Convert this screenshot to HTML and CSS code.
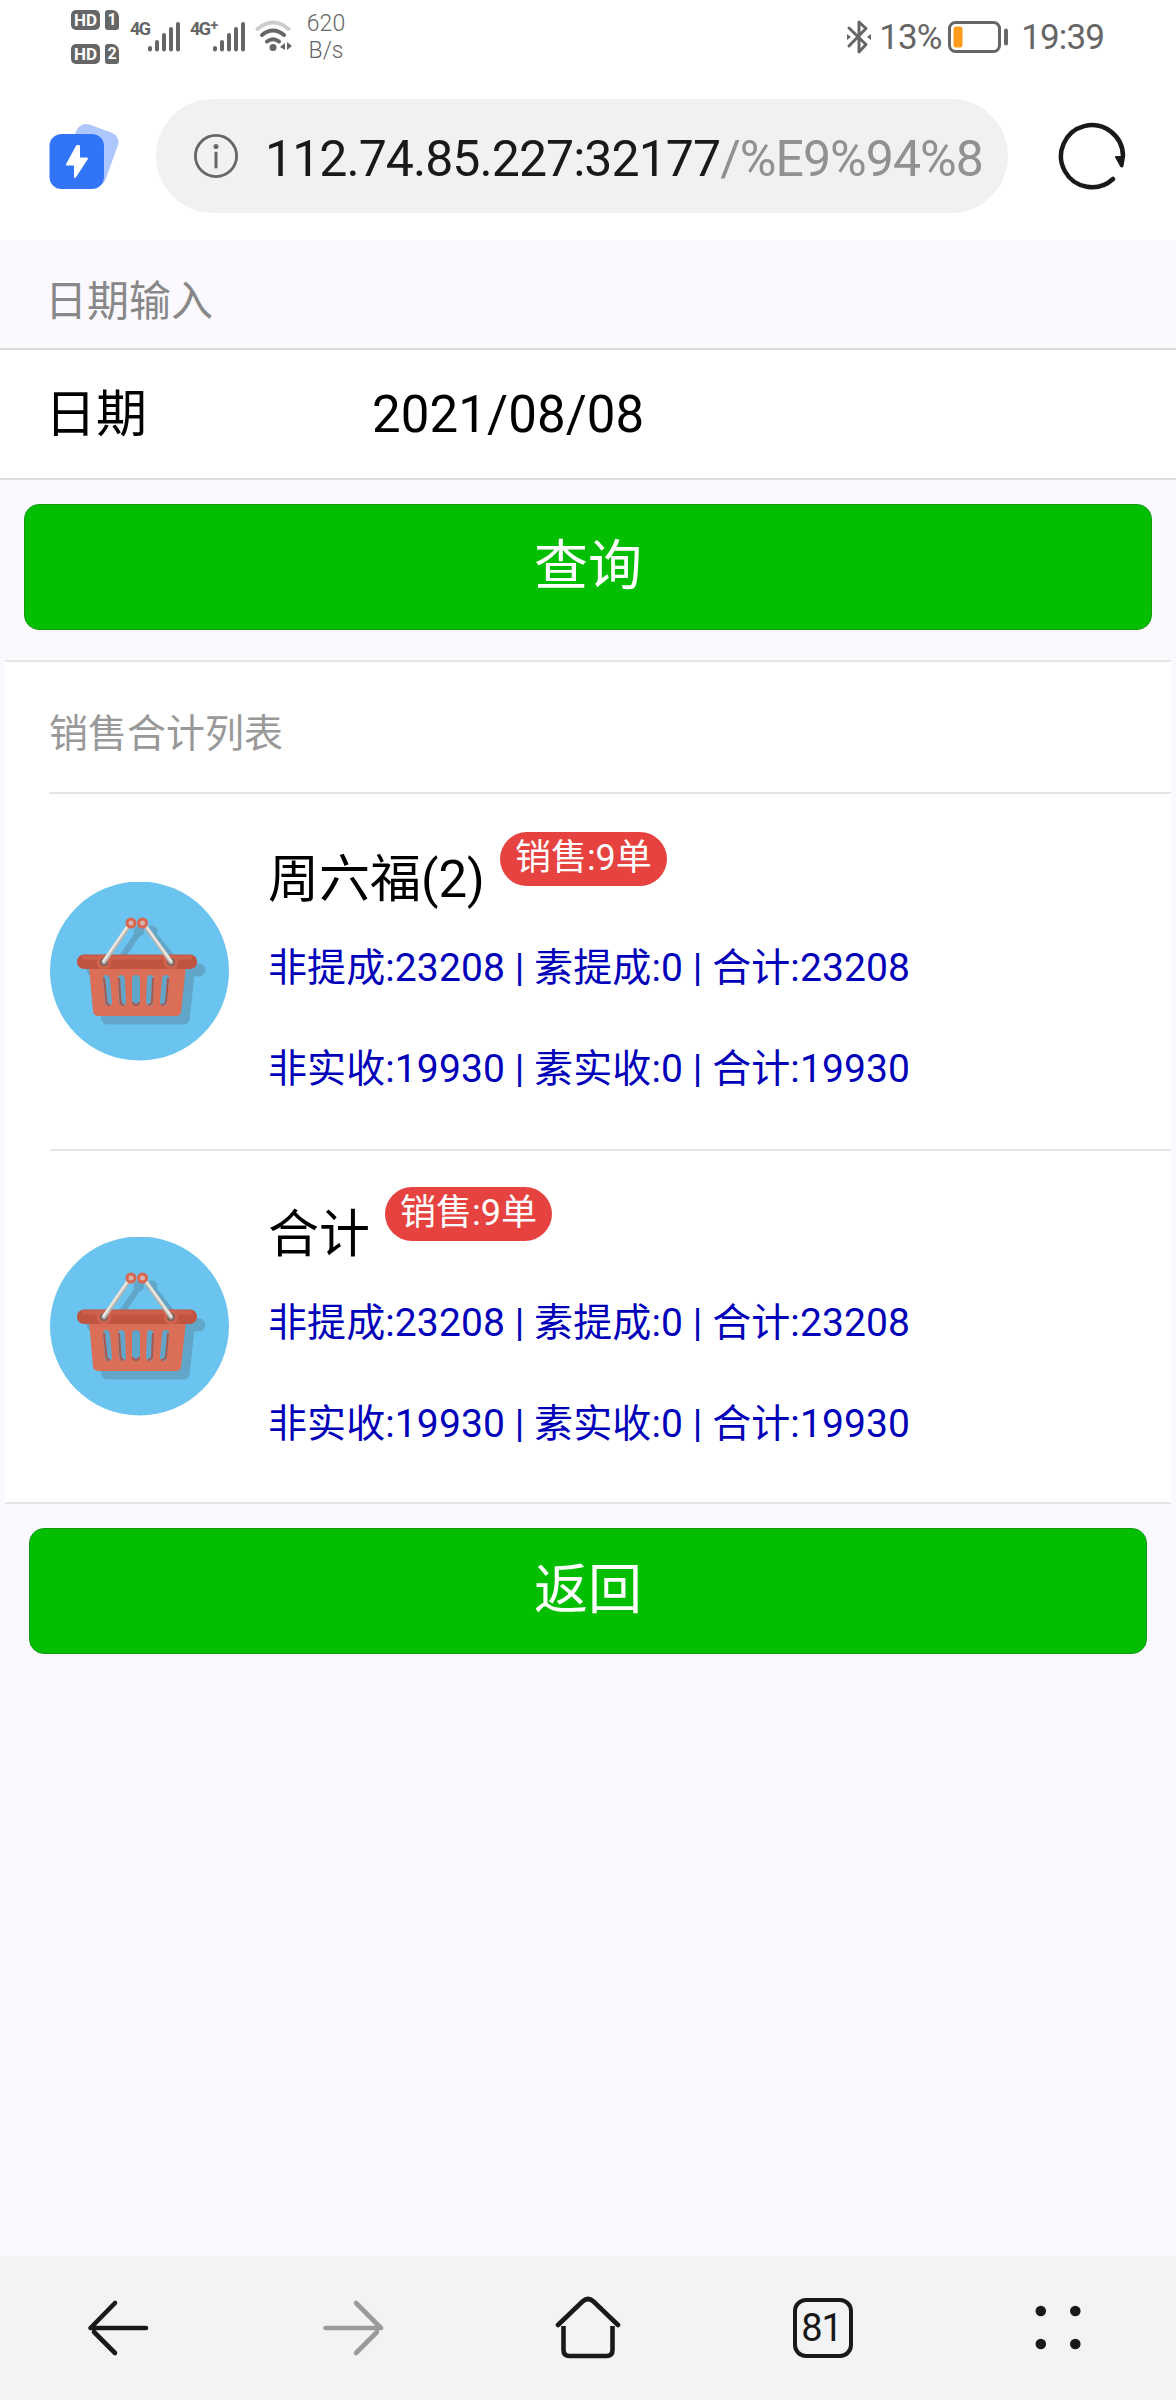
FILE: index.html
```html
<!DOCTYPE html>
<html lang="zh-CN">
<head>
<meta charset="utf-8">
<title>销售合计</title>
<link rel="stylesheet" href="styles.css">
</head>
<body>
<svg class="defs" width="0" height="0" aria-hidden="true">
  <defs>
    <g id="bars" fill="none" stroke="#666" stroke-width="4" stroke-linecap="round">
      <path d="M2 28v1.500M9 22v7.500M16 15v14.500M23 9v20.500M30 4v25.500"/>
    </g>
    <g id="basket">
      <circle cx="89.500" cy="89" r="89.500" fill="#6bc4f0"/>
      <g fill="#61a6c9" stroke="#61a6c9">
        <path d="M89 50L63 88M102 50L132 88" stroke-width="6" fill="none"/>
        <circle cx="89" cy="49" r="5"/><circle cx="102" cy="49" r="5"/>
        <rect x="37" y="82" width="118" height="12" rx="6"/>
        <path d="M48 92H144L139 138Q138 142 134 142H57Q53 142 52 138Z"/>
      </g>
      <path fill="#da6e57" fill-rule="evenodd" d="M39 84H136L131 130Q130 134 126 134H49Q44 134 43 130ZM53 97Q53 93 56 93T60 97L62 120Q62 124 58.500 124T55 120ZM68 97Q68 93 71 93T75 97L76 120Q76 124 73 124T69 120ZM82 97Q82 93 86 93T90 97V120Q90 124 86 124T82 120ZM97 97Q97 93 100 93T104 97L103 120Q103 124 100 124T96 120ZM112 97Q112 93 116 93T119 97L117 120Q117 124 113.500 124T110 120Z"/>
      <path fill="none" stroke="#a95850" stroke-width="2" d="M54 96L56.500 120Q57 123 60 123M69 96L70.500 120Q71 123 74 123M83 120Q83 123 86 123T89 120M103 96L102 120Q101 123 98 123M118 96L116 120Q115 123 111 123"/>
      <rect x="27" y="72.500" width="120" height="14.500" rx="7" fill="#c05440"/>
      <path d="M34 75.500H140" stroke="#cf604b" stroke-width="4" stroke-linecap="round"/>
      <circle cx="54" cy="80" r="7.500" fill="#d0614d"/><circle cx="121" cy="80" r="7.500" fill="#d0614d"/>
      <circle cx="54" cy="80" r="4" fill="#7b6261"/><circle cx="121" cy="80" r="4" fill="#7b6261"/>
      <path d="M78 45L54 80M96 45L121 80" stroke="#b9b4ae" stroke-width="4.500" stroke-linecap="round"/>
      <path d="M77 45L53.500 79M96.500 45L121 79" stroke="#e9e6e1" stroke-width="2.500" stroke-linecap="round"/>
      <circle cx="81" cy="41" r="4" fill="#d9b5ae" stroke="#d9664f" stroke-width="3"/>
      <circle cx="92.500" cy="41" r="4" fill="#d9b5ae" stroke="#d9664f" stroke-width="3"/>
    </g>
  </defs>
</svg>

<header class="status">
  <div class="sims">
    <div class="sim"><span class="hd">HD</span><span class="slot">1</span></div>
    <div class="sim"><span class="hd">HD</span><span class="slot">2</span></div>
  </div>
  <div class="signal"><span class="net">4G</span><svg width="34" height="34"><use href="#bars"/></svg></div>
  <div class="signal signal-plus"><span class="net">4G<span class="plus">+</span></span><svg width="34" height="34"><use href="#bars"/></svg></div>
  <svg class="wifi" width="38" height="34" viewBox="0 0 38 34" fill="none" stroke-width="4" stroke-linecap="round">
    <path d="M2.500 10Q18 -3 33.500 10" stroke="#ccc"/>
    <path d="M7 16Q18 7 29 16M12 22.500Q18 18 24 22.500" stroke="#666"/>
    <circle cx="18" cy="28.500" r="3.500" fill="#666"/>
    <path d="M30 24V31L25 28ZM32 23V31L37 27Z" fill="#666"/>
  </svg>
  <div class="speed"><span>620</span><span>B/s</span></div>
  <div class="status-right">
    <svg width="26" height="36" viewBox="0 0 26 36" fill="none" stroke="#666" stroke-width="3" stroke-linejoin="round" stroke-linecap="round">
      <path d="M3 9L20 25.500L13 33V3L20 9.500L3 27"/>
      <path d="M1 15V21L5 18ZM25 15V21L21 18Z" fill="#666" stroke="none"/>
    </svg>
    <span class="pct">13%</span>
    <svg width="60" height="32" viewBox="0 0 60 32">
      <rect x="1.500" y="1.500" width="50" height="29" rx="6" fill="none" stroke="#666" stroke-width="3"/>
      <rect x="5.500" y="5.500" width="9" height="21" rx="2.500" fill="#ff9b1a"/>
      <rect x="56" y="7.500" width="4" height="17" rx="2" fill="#666"/>
    </svg>
    <span class="clock">19:39</span>
  </div>
</header>

<div class="toolbar">
  <svg class="app" width="72" height="76" viewBox="0 0 72 76">
    <rect x="21" y="7" width="44" height="56" rx="10" transform="rotate(20 43 35)" fill="#adc6fc"/>
    <rect x="1.500" y="14" width="54.500" height="55" rx="12" fill="#3174f7"/>
    <path d="M29 26L19 44.500H27V57L39 38.500H31V26Z" fill="#fff" stroke="#fff" stroke-width="2" stroke-linejoin="round"/>
  </svg>
  <div class="address">
    <svg width="44" height="44" viewBox="0 0 44 44"><circle cx="22" cy="22" r="20.600" fill="none" stroke="#666" stroke-width="2.800"/><circle cx="22" cy="12.500" r="2.500" fill="#666"/><path d="M22 19V33" stroke="#666" stroke-width="3" stroke-linecap="round"/></svg>
    <div class="url">112.74.85.227:32177<span class="path">/%E9%94%8</span></div>
  </div>
  <svg class="reload" width="70" height="70" viewBox="0 0 70 70"><path d="M66 35A31 31 0 1 0 56 58" fill="none" stroke="#191919" stroke-width="4.500" stroke-linecap="round"/><path d="M59 36H67L65.500 45Q65 46 64 45Z" fill="#191919" stroke="#191919" stroke-width="2" stroke-linejoin="round"/></svg>
</div>

<main class="page">
  <h2 class="cells-title">日期输入</h2>
  <div class="cell"><label class="label">日期</label><span class="date">2021/08/08</span></div>
  <button class="btn">查询</button>

  <section class="panel">
    <div class="panel-head">销售合计列表</div>
    <article class="item">
      <svg width="180" height="179"><use href="#basket"/></svg>
      <div class="body">
        <h4 class="title">周六福(2)<span class="badge">销售:9单</span></h4>
        <p class="desc">非提成:23208 | 素提成:0 | 合计:23208</p>
        <p class="desc">非实收:19930 | 素实收:0 | 合计:19930</p>
      </div>
    </article>
    <article class="item">
      <svg width="180" height="179"><use href="#basket"/></svg>
      <div class="body">
        <h4 class="title">合计<span class="badge">销售:9单</span></h4>
        <p class="desc">非提成:23208 | 素提成:0 | 合计:23208</p>
        <p class="desc">非实收:19930 | 素实收:0 | 合计:19930</p>
      </div>
    </article>
  </section>
  <button class="btn btn-back">返回</button>
</main>

<nav class="nav">
  <svg width="64" height="64" viewBox="0 0 64 64" fill="none" stroke="#191919" stroke-width="4.600" stroke-linecap="round" stroke-linejoin="round"><path d="M60 32H4.500L29 7M29 57L8 36"/></svg>
  <svg width="64" height="64" viewBox="0 0 64 64" fill="none" stroke="#9b9b9d" stroke-width="4.600" stroke-linecap="round" stroke-linejoin="round"><path d="M4.500 32H60L35 7M35 57L56 36"/></svg>
  <svg width="68" height="64" viewBox="0 0 68 64" fill="none" stroke="#191919" stroke-width="4.600"><path d="M4 29L28.500 5.500Q34 .500 39.500 5.500L64 29" stroke-linecap="round"/><path d="M9.500 30V54Q9.500 60 15.500 60H52.500Q58.500 60 58.500 54V30"/></svg>
  <span class="tabs">81</span>
  <svg width="64" height="64" viewBox="0 0 64 64" fill="#191919"><circle cx="14.800" cy="15" r="5.300"/><circle cx="49.300" cy="15" r="5.300"/><circle cx="14.800" cy="48" r="5.300"/><circle cx="49.300" cy="48" r="5.300"/></svg>
</nav>
</body>
</html>
```
FILE: styles.css
```css
* { box-sizing: border-box; margin: 0; padding: 0; }

body {
  width: 1176px;
  height: 2400px;
  display: flex;
  flex-direction: column;
  background: #fff;
  font-family: Roboto, "Noto Sans CJK SC", sans-serif;
  color: #000;
  overflow: hidden;
}

svg { display: block; flex: none; }
.defs { position: absolute; }

/* Status bar */
.status {
  height: 80px;
  flex: none;
  display: flex;
  align-items: flex-start;
  padding: 10px 72px 0 71px;
  color: #666;
}
.sims { display: flex; flex-direction: column; gap: 14px; width: 59px; }
.sim { display: flex; gap: 5px; }
.hd, .slot {
  height: 20px;
  border-radius: 5px;
  background: #666;
  color: #fff;
  font-weight: 700;
  font-size: 17px;
  line-height: 20px;
  text-align: center;
}
.hd { width: 29px; }
.slot { width: 14px; border-radius: 3px 7px 3px 3px; font-size: 16px; }
.signal { display: flex; align-items: flex-start; padding-top: 10px; width: 60px; }
.net { width: 18px; font: 700 18px/18px "Liberation Sans Narrow", Roboto, sans-serif; letter-spacing: -1.5px; white-space: nowrap; }
.signal-plus { width: 65px; }
.signal-plus .net { display: flex; width: 23px; }
.plus { margin: -4px 0 0 1px; font-size: 14px; }
.wifi { margin-top: 9px; }
.speed {
  width: 56px;
  margin-left: 5px;
  display: flex;
  flex-direction: column;
  align-items: center;
  font-size: 23px;
  line-height: 27px;
  font-weight: 300;
}
.status-right { margin-left: auto; display: flex; align-items: center; padding-top: 10px; }
.status-right svg { margin-top: -3px; }
.pct, .clock { font-size: 35px; line-height: 36px; }
.pct { margin: 0 7px 0 7px; letter-spacing: -1px; }
.clock { margin-left: 13px; letter-spacing: -.9px; }

/* Browser toolbar */
.toolbar {
  height: 160px;
  flex: none;
  display: flex;
  align-items: flex-start;
  padding: 19px 0 0 48px;
}
.app { margin-top: 21px; }
.address {
  width: 852px;
  height: 114px;
  margin-left: 36px;
  padding-left: 38px;
  display: flex;
  align-items: center;
  gap: 27px;
  background: #f1f1f1;
  border-radius: 57px;
}
.url { padding-top: 6px; font-size: 50px; line-height: 60px; letter-spacing: -.95px; color: #191919; white-space: nowrap; }
.path { color: #919191; }
.reload { margin: 22px 0 0 49px; }

/* Page */
.page { flex: 1; background: #fbf9fe; }
.cells-title {
  height: 108px;
  padding: 30px 45px 0;
  font-size: 42px;
  line-height: 63px;
  font-weight: 400;
  color: #888;
}
.cell {
  height: 132px;
  display: flex;
  align-items: center;
  padding: 1px 45px 0;
  background: #fff;
  border: solid #dcdcdc;
  border-width: 2px 0;
  font-size: 51px;
  line-height: 72px;
}
.label { width: 327px; }
.date { letter-spacing: .1px; }
.btn {
  display: block;
  width: 1128px;
  height: 126px;
  margin: 24px auto 0;
  border: 1px solid #129912;
  border-radius: 15px;
  background: #04be02;
  color: #fff;
  font: 54px/122px Roboto, "Noto Sans CJK SC", sans-serif;
}
.panel {
  margin: 30px 5px 0;
  background: #fff;
  border: solid #e5e5e5;
  border-width: 2px 0;
}
.panel-head {
  height: 132px;
  margin-left: 44px;
  padding-top: 43px;
  font-size: 39px;
  line-height: 58px;
  color: #999;
  border-bottom: 2px solid #e5e5e5;
}
.item {
  height: 355px;
  margin-left: 45px;
  display: flex;
  align-items: center;
  gap: 38px;
}
.item + .item { height: 353px; border-top: 2px solid #e5e5e5; }
.body { display: flex; flex-direction: column; align-self: stretch; padding-top: 39px; }
.item + .item .body { padding-top: 37px; }
.title {
  display: flex;
  height: 85px;
  padding-top: 11px;
  font-size: 51px;
  line-height: 72px;
  font-weight: 400;
}
.badge {
  height: 54px;
  margin: -12px 0 0 15px;
  padding: 0 15px;
  border-radius: 27px;
  background: #e64340;
  color: #fff;
  font-size: 36px;
  line-height: 53px;
}
.desc { font-size: 39px; line-height: 101px; letter-spacing: .1px; color: #0000b8; white-space: nowrap; }
.btn-back { width: 1118px; }

/* Bottom navigation */
.nav {
  height: 144px;
  flex: none;
  display: grid;
  grid-template-columns: repeat(5, 1fr);
  align-items: center;
  justify-items: center;
  background: #f1f3f5;
}
.tabs {
  width: 60px;
  height: 60px;
  border: 4.5px solid #191919;
  border-radius: 13px;
  padding-left: 4px;
  font-size: 38px;
  line-height: 53px;
  letter-spacing: -1px;
  color: #191919;
}
```
